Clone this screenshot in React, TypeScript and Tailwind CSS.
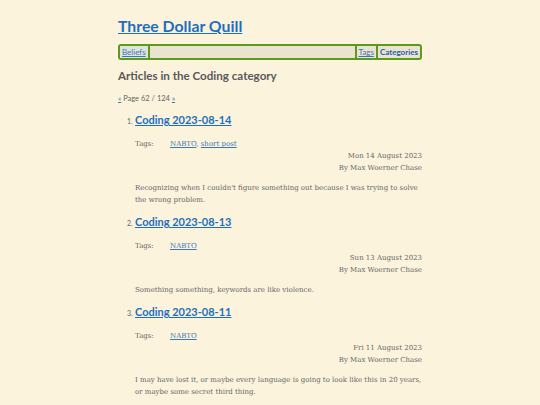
import React from 'react';

interface Article {
  title: string;
  tags: string[];
  date: string;
  summary: string;
}

const articles: Article[] = [
  {
    title: 'Coding 2023-08-14',
    tags: ['NABTO', 'short post'],
    date: 'Mon 14 August 2023',
    summary: "Recognizing when I couldn't figure something out because I was trying to solve the wrong problem.",
  },
  {
    title: 'Coding 2023-08-13',
    tags: ['NABTO'],
    date: 'Sun 13 August 2023',
    summary: 'Something something, keywords are like violence.',
  },
  {
    title: 'Coding 2023-08-11',
    tags: ['NABTO'],
    date: 'Fri 11 August 2023',
    summary: 'I may have lost it, or maybe every language is going to look like this in 20 years, or maybe some secret third thing.',
  },
];

const heading = "font-['Lato',sans-serif]";
const body = "font-['DejaVu_Serif',serif]";

export default function App() {
  return (
    <div className="min-h-[405px] bg-[#fcf3dc] text-[#555]">
      <div className="mx-auto w-[304px] pt-[14px]">
        <h1 className={`${heading} text-[15.8px] font-bold leading-[24px]`}>
          <a href="#" className="text-[#1e6fc0] underline">Three Dollar Quill</a>
        </h1>

        {/* menu */}
        <nav className={`${heading} mt-[6px] flex h-[16px] items-stretch rounded-[3px] border-2 border-[#5c9a1c] bg-[#e9e3d0] text-[8px]`}>
          <a href="#" className="flex items-center bg-[#dfe3dc] px-[2px] text-[#3a78b8] underline">Beliefs</a>
          <span className="w-[2px] bg-[#5c9a1c]" />
          <span className="flex-1" />
          <span className="w-[2px] bg-[#5c9a1c]" />
          <a href="#" className="flex items-center px-[2px] text-[#3a78b8] underline">Tags</a>
          <span className="w-[2px] bg-[#5c9a1c]" />
          <a href="#" className="flex items-center px-[2px] font-bold text-[#1e5fa8]">Categories</a>
        </nav>

        <h2 className={`${heading} mt-[7px] text-[11.6px] font-bold leading-[18px] text-[#5a5a5a]`}>
          Articles in the Coding category
        </h2>

        <p className={`${heading} mt-[9px] text-[7.5px] leading-[10px] text-[#666]`}>
          <a href="#" className="text-[#3a78b8] underline">«</a> Page 62 / 124{' '}
          <a href="#" className="text-[#3a78b8] underline">»</a>
        </p>

        <ol className="mt-[7px]">
          {articles.map((a, i) => (
            <li key={a.title} className="mb-[7px] pl-[17px]">
              <div className="flex items-baseline">
                <span className={`${heading} -ml-[8px] w-[8px] text-[7px] text-[#666]`}>{i + 1}.</span>
                <h3 className={`${heading} text-[11px] font-bold leading-[18px]`}>
                  <a href="#" className="text-[#1e6fc0] underline">{a.title}</a>
                </h3>
              </div>
              <div className={`${body} mt-[9px] flex text-[7px] leading-[12px] text-[#666]`}>
                <span className="w-[35px]">Tags:</span>
                <span>
                  {a.tags.map((t, j) => (
                    <React.Fragment key={t}>
                      {j > 0 && ', '}
                      <a href="#" className="text-[#3a78b8] underline">{t}</a>
                    </React.Fragment>
                  ))}
                </span>
              </div>
              <div className={`${body} text-right text-[7px] leading-[12px] text-[#666]`}>
                <div>{a.date}</div>
                <div>By Max Woerner Chase</div>
              </div>
              <p className={`${body} mt-[8px] text-[7px] leading-[12px] text-[#666]`}>{a.summary}</p>
            </li>
          ))}
        </ol>
      </div>
    </div>
  );
}
